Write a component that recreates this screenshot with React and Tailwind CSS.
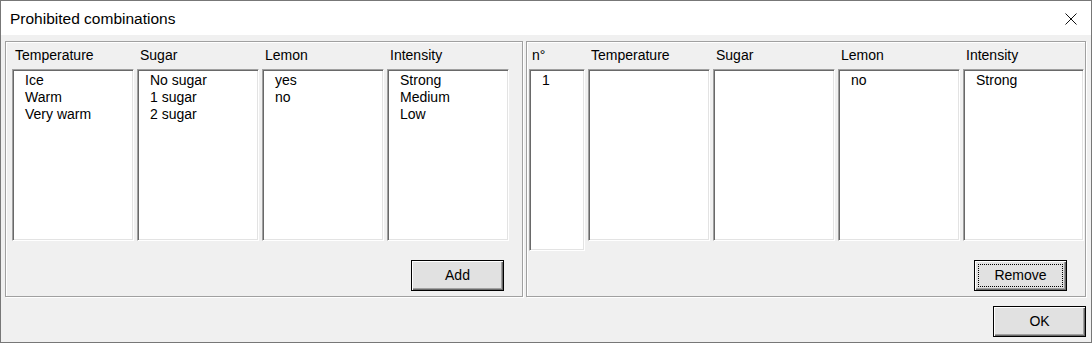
import React from 'react'

// column definitions for both panes
const LEFT_COLS = [
  { title: 'Temperature', items: ['Ice', 'Warm', 'Very warm'] },
  { title: 'Sugar', items: ['No sugar', '1 sugar', '2 sugar'] },
  { title: 'Lemon', items: ['yes', 'no'] },
  { title: 'Intensity', items: ['Strong', 'Medium', 'Low'] },
]

const RIGHT_COLS = [
  { title: 'n°', items: ['1'], box: 'w-[56px] h-[182px]' },
  { title: 'Temperature', items: [], box: 'w-[122px] h-[172px]' },
  { title: 'Sugar', items: [], box: 'w-[122px] h-[172px]' },
  { title: 'Lemon', items: ['no'], box: 'w-[122px] h-[172px]' },
  { title: 'Intensity', items: ['Strong'], box: 'w-[121px] h-[172px]' },
]

const sunken =
  'bg-white border border-t-[#a0a0a0] border-l-[#a0a0a0] border-r-white border-b-white shadow-[inset_1px_1px_0_#696969,inset_-1px_-1px_0_#e3e3e3]'

function Column({ title, items, box }) {
  return (
    <div className="flex flex-col">
      <div className="h-[27px] flex items-center pl-[3px] pb-[1px]">{title}</div>
      <div className={`${sunken} ${box} pl-[12px] pt-[2px] leading-[17px]`}>
        {items.map(it => (
          <div key={it}>{it}</div>
        ))}
      </div>
    </div>
  )
}

function Button({ children, focused, className = '' }) {
  return (
    <div
      className={`w-[93px] h-[31px] bg-[#e1e1e1] border border-black shadow-[inset_1px_1px_0_#fff,inset_-1px_-1px_0_#696969,inset_-2px_-2px_0_#a0a0a0] flex items-center justify-center p-[3px] ${className}`}
    >
      <div
        className={`w-full h-full flex items-center justify-center ${
          focused ? 'border border-dotted border-black' : ''
        }`}
      >
        {children}
      </div>
    </div>
  )
}

const group = 'h-[256px] flex flex-col border border-[#a0a0a0] shadow-[inset_1px_1px_0_#fff,1px_1px_0_#fff]'

export default function App() {
  return (
    <div
      className="w-[1092px] h-[343px] border border-[#777777] bg-[#f0f0f0] flex flex-col text-[14px] text-black"
      style={{ fontFamily: '"Liberation Sans", Arial, sans-serif' }}
    >
      {/* title bar */}
      <div className="h-[34px] bg-white flex items-center justify-between pl-[9px] pr-[14px]">
        <span className="text-[15.5px] pt-[2px]">Prohibited combinations</span>
        <svg width="12" height="12" viewBox="0 0 12 12" className="mt-[2px]">
          <path d="M0.5 0.5 L11.5 11.5 M11.5 0.5 L0.5 11.5" stroke="#111" strokeWidth="1" />
        </svg>
      </div>

      <div className="flex flex-col pt-[6px] pl-[4px] pr-[5px]">
        <div className="flex gap-[3px]">
          {/* left pane: available values */}
          <div className={`${group} w-[518px]`}>
            <div className="flex gap-[3px] pl-[6px]">
              {LEFT_COLS.map(c => (
                <Column key={c.title} {...c} box="w-[122px] h-[172px]" />
              ))}
            </div>
            <Button className="mt-auto mb-[5px] self-end mr-[18px]">Add</Button>
          </div>

          {/* right pane: prohibited list */}
          <div className={`${group} w-[560px]`}>
            <div className="flex gap-[3px] pl-[2px]">
              {RIGHT_COLS.map(c => (
                <Column key={c.title} {...c} />
              ))}
            </div>
            <Button focused className="mt-auto mb-[5px] self-end mr-[18px]">
              Remove
            </Button>
          </div>
        </div>

        <div className="flex justify-end mt-[9px]">
          <Button>OK</Button>
        </div>
      </div>
    </div>
  )
}
